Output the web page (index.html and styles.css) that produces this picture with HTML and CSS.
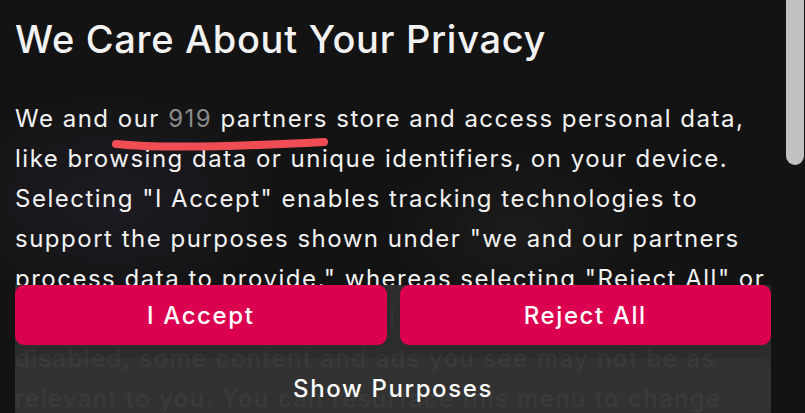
FILE: index.html
```html
<!DOCTYPE html>
<html lang="en">
<head>
<meta charset="utf-8">
<title>Privacy</title>
<link rel="stylesheet" href="styles.css">
</head>
<body>
<div class="screen">
  <div class="dialog">
    <h1 class="title">We Care About Your Privacy</h1>
    <p class="desc">We and <span class="mark">our <span class="count">919</span> partners<svg class="scribble" viewBox="0 0 230 20" width="230" height="20" aria-hidden="true"><path d="M4 10 Q 60 16 212 8" fill="none" stroke="#ef4d53" stroke-width="8" stroke-linecap="round"/></svg></span> store and access personal data,<br>like browsing data or unique identifiers, on your device.<br>Selecting "I Accept" enables tracking technologies to<br>support the purposes shown under "we and our partners<br>process data to provide," whereas selecting "Reject All" or<br>withdrawing your consent will disable them. If trackers are<br>disabled, some content and ads you see may not be as<br>relevant to you. You can resurface this menu to change<br>your choices or withdraw consent at any time.</p>
  </div>
  <div class="footer">
    <div class="row">
      <button class="btn primary">I Accept</button>
      <button class="btn primary">Reject All</button>
    </div>
    <button class="btn secondary">Show Purposes</button>
  </div>
  <div class="scrollbar"></div>
</div>
</body>
</html>
```

FILE: styles.css
```css
html, body {
  margin: 0;
  padding: 0;
  background: #131313;
}
body {
  font-family: "Inter", "Noto Sans", sans-serif;
  color: #f2f2f2;
  overflow: hidden;
}
.screen {
  position: relative;
  width: 805px;
  height: 413px;
  overflow: hidden;
  background:
    radial-gradient(ellipse 260px 160px at 110px 200px, rgba(60, 50, 80, 0.25), transparent 70%),
    radial-gradient(ellipse 200px 120px at 520px 230px, rgba(60, 60, 60, 0.2), transparent 70%),
    #131313;
}
.dialog {
  width: 756px;
  padding-left: 15px;
}
.title {
  margin: 16px 0 0;
  font-size: 38px;
  line-height: 46px;
  font-weight: 500;
  letter-spacing: 0.7px;
  white-space: nowrap;
}
.desc {
  margin: 37px 0 0;
  font-size: 24px;
  line-height: 40px;
  font-weight: 400;
  letter-spacing: 1.5px;
  white-space: nowrap;
}
.mark {
  position: relative;
}
.count {
  color: #8a8a8a;
}
.scribble {
  position: absolute;
  left: -6px;
  top: 30px;
}
.footer {
  position: absolute;
  left: 15px;
  top: 285px;
  width: 756px;
  bottom: 0;
  background: rgba(46, 46, 46, 0.965);
}
.row {
  display: grid;
  grid-template-columns: 1fr 1fr;
  gap: 13px;
}
.btn {
  font-family: "Inter", "Noto Sans", sans-serif;
  font-size: 24px;
  font-weight: 500;
  letter-spacing: 1.6px;
  color: #ffffff;
  border: none;
  border-radius: 9px;
  height: 60px;
  padding: 0;
}
.primary {
  background: #dc0050;
}
.secondary {
  display: block;
  width: 100%;
  margin-top: 13px;
  background: rgba(255, 255, 255, 0.03);
}
.scrollbar {
  position: absolute;
  right: 1px;
  top: 0;
  width: 18px;
  height: 165px;
  background: #c2c2c2;
  border-radius: 0 0 9px 9px;
}
```
